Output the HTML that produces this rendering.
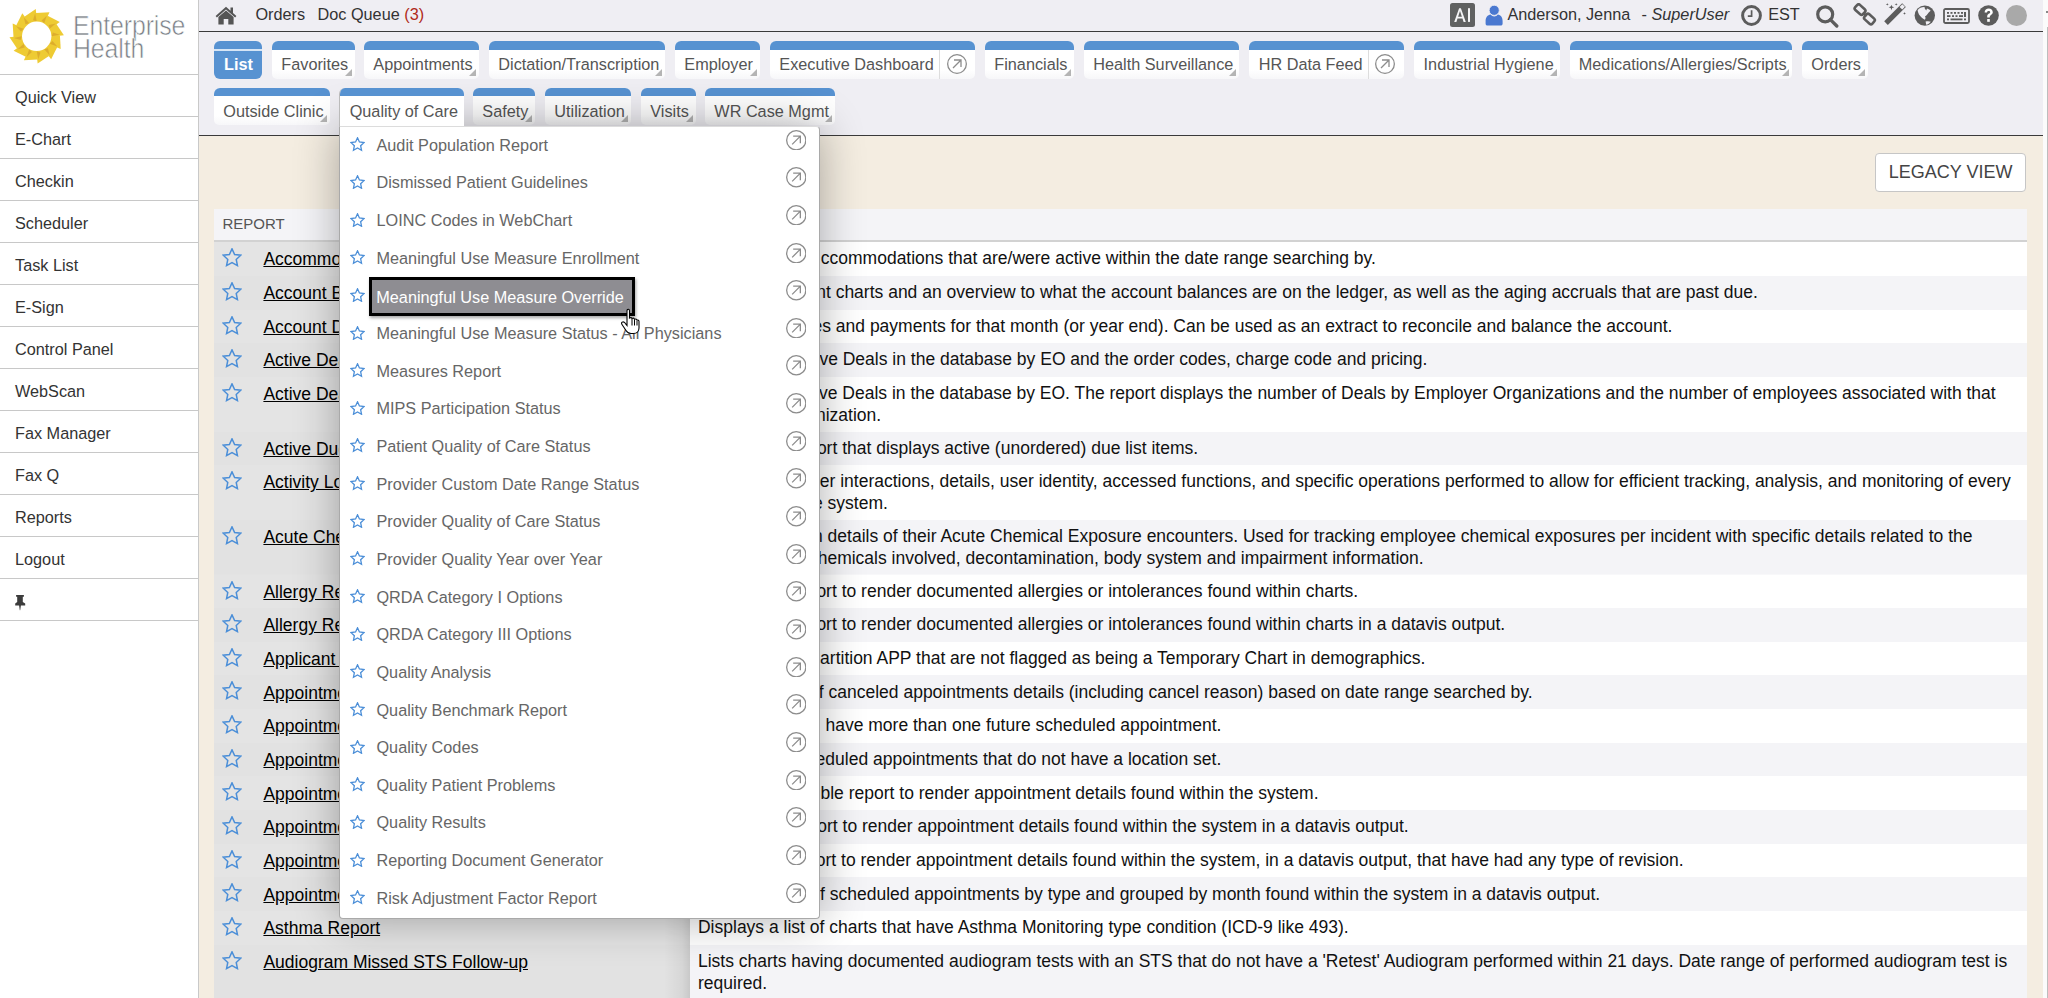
<!DOCTYPE html><html><head><meta charset="utf-8"><style>
*{box-sizing:border-box;margin:0;padding:0}
html,body{width:2048px;height:998px;overflow:hidden;background:#fff;font-family:"Liberation Sans", sans-serif;}
.abs{position:absolute}
#side{position:absolute;left:0;top:0;width:199px;height:998px;background:#fff;border-right:1px solid #c9c9c9}
.sitem{position:absolute;left:0;width:198px;height:42px;border-top:1.5px solid #c8c8c8;font-size:16.25px;color:#333;padding-left:15.5px}
.sitem span{position:absolute;left:15px;top:13.4px;line-height:18px}
#top{position:absolute;left:199px;top:0;width:1844px;height:32px;background:#efeef3;border-bottom:1.5px solid #3a3a3a}
#tabs{position:absolute;left:199px;top:32px;width:1844px;height:104px;background:#efeef3;border-bottom:1.5px solid #3a3a3a}
#content{position:absolute;left:199px;top:136px;width:1844px;height:862px;background:#f4ede1}
.tt{position:absolute;font-size:16.25px;color:#333;white-space:nowrap;line-height:18px;margin-top:-1.6px}
.tab{position:absolute;height:37.5px;border-radius:6px 6px 5px 5px;background:linear-gradient(#fff 0%,#fff 75%,#f7f7f9 100%);overflow:hidden;font-size:16.25px;color:#555;white-space:nowrap}
.tab .bar{position:absolute;left:0;top:0;right:0;height:8.5px;background:#5792d1}
.tab .lbl{position:absolute;left:9.3px;top:13.7px;line-height:18px}
.tab .tri{position:absolute;right:3px;bottom:3px;width:0;height:0;border-left:7px solid transparent;border-bottom:7px solid #b4b4b4}
.tab .div{position:absolute;top:9px;bottom:0;width:1px;background:#ddd}
.tab .ic{position:absolute;top:12.5px}
#tbl{position:absolute;left:214px;top:209px;width:1813px}
.hdr{position:absolute;left:0;top:0;width:1813px;height:33.3px;background:#f4f4f7;border-bottom:2px solid #d2d2d2}
.hdr span{position:absolute;left:8.5px;top:7px;font-size:15px;color:#555;line-height:16px}
.row{position:absolute;left:0;width:1813px}
.rc{position:absolute;left:0;top:0;bottom:0;width:475.6px;background:#e2e2e2 linear-gradient(to right,rgba(0,0,0,0) 0,rgba(0,0,0,0) 450px,rgba(0,0,0,0.05) 468px,rgba(0,0,0,0.11) 475.6px)}
.rc.odd{background-color:#e4e4e4}
.rc .st{position:absolute;left:8px;top:6px}
.rc a{position:absolute;left:49.4px;top:7.2px;font-size:17.5px;line-height:20px;color:#000;text-decoration:underline;white-space:nowrap}
.dc{position:absolute;left:475.6px;top:0;bottom:0;right:0;background:#fff}
.dc.even{background:#f4f4f7}
.dc .tx{position:absolute;left:8.4px;top:6.2px;font-size:17.5px;line-height:21px;color:#111;white-space:nowrap}
.sp{display:inline-block;height:1px}
#dd{position:absolute;left:338.7px;top:125.5px;width:481.7px;height:793px;background:#fff;border:1px solid #a9a9a9;border-top-color:#dcdcdc;border-radius:0 4px 4px 4px;box-shadow:0 0 45px rgba(0,0,0,0.32)}
.di{position:absolute;left:0;width:478px;height:37.65px}
.di .st{position:absolute;left:10.3px;top:9.3px}
.di .t{position:absolute;left:36.8px;top:7.8px;font-size:16.25px;line-height:18px;color:#666;white-space:nowrap}
.di .ar{position:absolute;left:446.3px;top:1.6px}
#hl{position:absolute;left:29.8px;top:150px;width:266px;height:39.5px;background:#8e8d92;border:3.7px solid #000;box-shadow:1px 2px 3px rgba(0,0,0,0.35)}
#hl span{position:absolute;left:3.8px;top:8.1px;font-size:16.25px;line-height:18px;color:#fff;white-space:nowrap}
</style></head><body>
<div id="side">
<svg class="abs" style="left:0;top:0" width="75" height="75" viewBox="0 0 75 75"><path d="M35.75,9.12 L37.19,22.31 L27.33,25.90 L24.41,16.63 Z" fill="#eecb33"/><path d="M49.47,12.28 L44.12,24.43 L33.79,22.61 L35.89,13.11 Z" fill="#eecb33"/><path d="M59.77,21.89 L49.06,29.73 L41.03,22.99 L47.59,15.82 Z" fill="#eecb33"/><path d="M63.88,35.35 L50.69,36.79 L47.10,26.93 L56.37,24.01 Z" fill="#eecb33"/><path d="M60.72,49.07 L48.57,43.72 L50.39,33.39 L59.89,35.49 Z" fill="#eecb33"/><path d="M51.11,59.37 L43.27,48.66 L50.01,40.63 L57.18,47.19 Z" fill="#eecb33"/><path d="M37.65,63.48 L36.21,50.29 L46.07,46.70 L48.99,55.97 Z" fill="#eecb33"/><path d="M23.93,60.32 L29.28,48.17 L39.61,49.99 L37.51,59.49 Z" fill="#eecb33"/><path d="M13.63,50.71 L24.34,42.87 L32.37,49.61 L25.81,56.78 Z" fill="#eecb33"/><path d="M9.52,37.25 L22.71,35.81 L26.30,45.67 L17.03,48.59 Z" fill="#eecb33"/><path d="M12.68,23.53 L24.83,28.88 L23.01,39.21 L13.51,37.11 Z" fill="#eecb33"/><path d="M22.29,13.23 L30.13,23.94 L23.39,31.97 L16.22,25.41 Z" fill="#eecb33"/><path d="M35.10,13.36 L36.70,21.30 L32.99,20.22 Z" fill="#d9a82c" opacity="0.85"/><path d="M46.78,15.63 L44.20,23.31 L41.52,20.52 Z" fill="#d9a82c" opacity="0.85"/><path d="M55.77,23.44 L49.69,28.80 L48.77,25.05 Z" fill="#d9a82c" opacity="0.85"/><path d="M59.64,34.70 L51.70,36.30 L52.78,32.59 Z" fill="#d9a82c" opacity="0.85"/><path d="M57.37,46.38 L49.69,43.80 L52.48,41.12 Z" fill="#d9a82c" opacity="0.85"/><path d="M49.56,55.37 L44.20,49.29 L47.95,48.37 Z" fill="#d9a82c" opacity="0.85"/><path d="M38.30,59.24 L36.70,51.30 L40.41,52.38 Z" fill="#d9a82c" opacity="0.85"/><path d="M26.62,56.97 L29.20,49.29 L31.88,52.08 Z" fill="#d9a82c" opacity="0.85"/><path d="M17.63,49.16 L23.71,43.80 L24.63,47.55 Z" fill="#d9a82c" opacity="0.85"/><path d="M13.76,37.90 L21.70,36.30 L20.62,40.01 Z" fill="#d9a82c" opacity="0.85"/><path d="M16.03,26.22 L23.71,28.80 L20.92,31.48 Z" fill="#d9a82c" opacity="0.85"/><path d="M23.84,17.23 L29.20,23.31 L25.45,24.23 Z" fill="#d9a82c" opacity="0.85"/><circle cx="36.7" cy="36.3" r="14.7" fill="#fff"/></svg>
<div class="abs" style="left:72.5px;top:14.5px;font-size:27px;line-height:23px;color:#7a8086;transform:scaleX(0.92);transform-origin:0 0;letter-spacing:-0.1px;-webkit-text-stroke:0.6px #fff">Enterprise<br>Health</div>
<div class="sitem" style="top:73.8px"><span>Quick View</span></div>
<div class="sitem" style="top:115.8px"><span>E-Chart</span></div>
<div class="sitem" style="top:157.8px"><span>Checkin</span></div>
<div class="sitem" style="top:199.8px"><span>Scheduler</span></div>
<div class="sitem" style="top:241.8px"><span>Task List</span></div>
<div class="sitem" style="top:283.8px"><span>E-Sign</span></div>
<div class="sitem" style="top:325.8px"><span>Control Panel</span></div>
<div class="sitem" style="top:367.8px"><span>WebScan</span></div>
<div class="sitem" style="top:409.8px"><span>Fax Manager</span></div>
<div class="sitem" style="top:451.8px"><span>Fax Q</span></div>
<div class="sitem" style="top:493.8px"><span>Reports</span></div>
<div class="sitem" style="top:535.8px"><span>Logout</span></div>
<div class="sitem" style="top:577.8px;border-bottom:1.5px solid #c8c8c8;height:43.5px"><svg class="abs" style="left:15px;top:14.8px" width="11" height="17" viewBox="0 0 11 17"><path d="M1.1,1 H8.9 V2.8 H7.8 V8 L10.2,9.5 V11.6 H5.9 L5.2,16.2 H4.8 L4.1,11.6 H0.2 V9.5 L2.2,8 V2.8 H1.1 Z" fill="#3c3c3c"/></svg></div>
</div>
<div id="top">
</div>
<svg class="abs" style="left:214.5px;top:5.5px" width="22" height="19" viewBox="0 0 22 19"><path d="M11,0.8 L0.6,10 L1.9,11.4 L11,3.4 L20.1,11.4 L21.4,10 L18,7 V1.5 H15.5 V4.8 Z" fill="#555"/><path d="M3.4,11 L11,4.6 L18.6,11 V18.6 H13.3 V13 H8.7 V18.6 H3.4 Z" fill="#555"/></svg>
<div class="tt" style="left:255.4px;top:6.5px">Orders</div>
<div class="tt" style="left:317.5px;top:6.5px">Doc Queue <span style="color:#b02a1a">(3)</span></div>
<div class="abs" style="left:1450.3px;top:2.9px;width:24.6px;height:24px;background:#606161;border-radius:2.5px"></div>
<svg class="abs" style="left:1450.3px;top:2.9px" width="25" height="24" viewBox="0 0 25 24"><path d="M4.2,18.9 L9.1,5.2 H10.9 L15.8,18.9 H13.6 L12.5,15.6 H7.5 L6.4,18.9 Z M8.1,13.8 H11.9 L10,8 Z" fill="#f4f4f6"/><rect x="18" y="5.2" width="2" height="13.7" fill="#f4f4f6"/></svg>
<svg class="abs" style="left:1484.5px;top:4.5px" width="18" height="21" viewBox="0 0 18 21"><path d="M0.6,18.8 V16.2 C0.6,12.6 2.6,10 5.6,9.6 C6.6,10.9 7.8,11.4 9.2,11.4 C10.6,11.4 11.8,10.9 12.8,9.6 C15.8,10 17.6,12.6 17.6,16.2 V18.8 C17.6,19.9 16.8,20.6 15.7,20.6 H2.5 C1.4,20.6 0.6,19.9 0.6,18.8 Z" fill="#4a78d0"/><circle cx="9.2" cy="5.3" r="5.1" fill="#4a78d0" stroke="#efeef3" stroke-width="0.9"/></svg>
<div class="tt" style="left:1507.4px;top:6.5px">Anderson, Jenna</div>
<div class="tt" style="left:1641.5px;top:6.5px">- <i>SuperUser</i></div>
<svg class="abs" style="left:1741px;top:4.5px" width="21" height="21" viewBox="0 0 21 21"><circle cx="10.5" cy="10.5" r="8.9" fill="none" stroke="#5c5c5c" stroke-width="3"/><path d="M10.6,5.3 V11.1 H6.8" fill="none" stroke="#5c5c5c" stroke-width="1.7"/></svg>
<div class="tt" style="left:1768.2px;top:6.5px">EST</div>
<svg class="abs" style="left:1815.5px;top:4.5px" width="23" height="23" viewBox="0 0 23 23"><circle cx="9.2" cy="9.3" r="7.5" fill="none" stroke="#5c5c5c" stroke-width="3.2"/><path d="M14.4,14.6 L20.8,21" stroke="#5c5c5c" stroke-width="3.3" stroke-linecap="round"/></svg>
<svg class="abs" style="left:1853px;top:2.5px" width="24" height="23" viewBox="0 0 24 23"><g fill="none" stroke="#5c5c5c" stroke-width="2.6"><rect x="1.8" y="3.2" width="10.5" height="6.8" rx="2" transform="rotate(42 7.05 6.6)"/><rect x="11.2" y="12.6" width="10.5" height="6.8" rx="2" transform="rotate(42 16.45 16)"/><path d="M9.8,9.8 L13.6,13"/></g></svg>
<svg class="abs" style="left:1880px;top:0px" width="30" height="30" viewBox="0 0 30 30"><path d="M4.2,21.3 L22.2,3.3 L25.8,6.9 L7.8,24.9 Z" fill="#5c5c5c"/><path d="M19.6,6.9 L22.3,4.2 L24.9,6.8 L22.2,9.5 Z" fill="#f0eff4"/><g fill="#5c5c5c"><path d="M11.4,4.8 L12.1,6.6 L14.3,7.3 L12.1,8 L11.4,10.2 L10.7,8 L8.6,7.3 L10.7,6.6 Z"/><path d="M7.3,3.3 L7.8,4 L8.8,4.4 L7.8,4.8 L7.3,5.6 L6.8,4.8 L5.8,4.4 L6.8,4 Z"/><path d="M16.2,3.3 L16.7,4 L17.7,4.4 L16.7,4.8 L16.2,5.6 L15.7,4.8 L14.7,4.4 L15.7,4 Z"/><path d="M24.5,12.2 L25,13 L26,13.4 L25,13.8 L24.5,14.8 L24,13.8 L23,13.4 L24,13 Z"/></g></svg>
<svg class="abs" style="left:1914px;top:4.5px" width="22" height="22" viewBox="0 0 22 22"><circle cx="10.8" cy="10.6" r="10.2" fill="#5c5c5c"/><path d="M3.6,5.2 C5,2.8 8,1.8 10.5,1.9 L10.8,3.5 L12.2,5.5 L13,3.5 C14.5,4 16,4.8 16.6,5.8 C15,7 14,8.6 12.6,10.2 L11,11.4 L11.6,13 L10.9,14.8 C8.5,13.5 6.5,11.5 5,9.5 C4.2,8 3.8,6.5 3.6,5.2 Z" fill="#f0eff4"/><path d="M11.6,16.6 C13.5,16 15.5,16.2 16.8,16.8 C15.2,18.8 13.5,19.6 12.2,19.8 Z" fill="#f0eff4"/></svg>
<svg class="abs" style="left:1943px;top:8px" width="27" height="16" viewBox="0 0 27 16"><rect x="1" y="1" width="25" height="14" rx="1.5" fill="none" stroke="#5c5c5c" stroke-width="1.8"/><g fill="#5c5c5c"><rect x="4" y="4" width="2" height="1.8"/><rect x="7.5" y="4" width="2" height="1.8"/><rect x="11" y="4" width="2" height="1.8"/><rect x="14.5" y="4" width="2" height="1.8"/><rect x="18" y="4" width="2" height="1.8"/><rect x="21" y="4" width="2" height="5"/><rect x="4" y="7.2" width="3.5" height="1.8"/><rect x="9" y="7.2" width="2" height="1.8"/><rect x="12.5" y="7.2" width="2" height="1.8"/><rect x="16" y="7.2" width="4" height="1.8"/><rect x="4" y="10.5" width="2" height="1.8"/><rect x="7.5" y="10.5" width="12" height="1.8"/><rect x="21" y="10.5" width="2" height="1.8"/></g></svg>
<svg class="abs" style="left:1977.5px;top:4.5px" width="21" height="21" viewBox="0 0 21 21"><circle cx="10.5" cy="10.5" r="10.3" fill="#5c5c5c"/><path d="M6.6,7.6 C6.6,5 8.5,3.6 10.7,3.6 C13,3.6 14.8,5 14.8,7.3 C14.8,9.8 11.8,10 11.8,12 V12.6 H9.2 V11.6 C9.2,8.6 12.2,8.8 12.2,7.3 C12.2,6.4 11.6,5.9 10.6,5.9 C9.6,5.9 9,6.6 9,7.6 Z" fill="#fff"/><rect x="9.2" y="14" width="2.6" height="2.8" fill="#fff"/></svg>
<div class="abs" style="left:2006px;top:4.5px;width:21px;height:21px;border-radius:50%;background:#a9a9a9"></div>
<div id="tabs"></div>
<div id="content"></div>
<div class="abs" style="left:2043px;top:0;width:5px;height:998px;background:#fbfbfb"></div>
<div class="abs" style="left:2046.5px;top:27px;width:1.5px;height:971px;background:#bdbdbd"></div>
<div class="abs" style="left:2046px;top:11px;width:2px;height:2px;background:#888"></div>
<div class="abs" style="left:214px;top:41px;width:47.5px;height:37.5px;border-radius:6px;background:#5792d1;overflow:hidden"><div class="abs" style="left:0;top:8.3px;width:100%;height:1.3px;background:#d6e5f5"></div><div class="abs" style="left:10px;top:13.7px;font-size:16.25px;line-height:18px;color:#fff;font-weight:bold">List</div></div>
<div class="tab" style="left:272px;top:41px;width:82.8px;height:37.6px"><div class="bar"></div><div class="lbl">Favorites</div><div class="tri"></div></div>
<div class="tab" style="left:364px;top:41px;width:115px;height:37.6px"><div class="bar"></div><div class="lbl">Appointments</div><div class="tri"></div></div>
<div class="tab" style="left:489px;top:41px;width:176px;height:37.6px"><div class="bar"></div><div class="lbl">Dictation/Transcription</div><div class="tri"></div></div>
<div class="tab" style="left:675px;top:41px;width:85px;height:37.6px"><div class="bar"></div><div class="lbl">Employer</div><div class="tri"></div></div>
<div class="tab" style="left:770px;top:41px;width:205px;height:37.6px"><div class="bar"></div><div class="lbl">Executive Dashboard</div><div class="div" style="left:169px"></div><div class="ic" style="left:176.5px"><svg width="20" height="20" viewBox="0 0 20 20"><circle cx="10.0" cy="10.0" r="9.35" fill="none" stroke="#8c8c8c" stroke-width="1.3"/><path d="M6.00,14.00 L14.00,6.00 M7.00,6.00 L14.00,6.00 L14.00,13.00" fill="none" stroke="#8c8c8c" stroke-width="1.3"/></svg></div></div>
<div class="tab" style="left:985px;top:41px;width:89px;height:37.6px"><div class="bar"></div><div class="lbl">Financials</div><div class="tri"></div></div>
<div class="tab" style="left:1084px;top:41px;width:155px;height:37.6px"><div class="bar"></div><div class="lbl">Health Surveillance</div><div class="tri"></div></div>
<div class="tab" style="left:1249.4px;top:41px;width:154.6px;height:37.6px"><div class="bar"></div><div class="lbl">HR Data Feed</div><div class="div" style="left:118.6px"></div><div class="ic" style="left:126.1px"><svg width="20" height="20" viewBox="0 0 20 20"><circle cx="10.0" cy="10.0" r="9.35" fill="none" stroke="#8c8c8c" stroke-width="1.3"/><path d="M6.00,14.00 L14.00,6.00 M7.00,6.00 L14.00,6.00 L14.00,13.00" fill="none" stroke="#8c8c8c" stroke-width="1.3"/></svg></div></div>
<div class="tab" style="left:1414.3px;top:41px;width:145.5px;height:37.6px"><div class="bar"></div><div class="lbl">Industrial Hygiene</div><div class="tri"></div></div>
<div class="tab" style="left:1569.5px;top:41px;width:222.5px;height:37.6px"><div class="bar"></div><div class="lbl">Medications/Allergies/Scripts</div><div class="tri"></div></div>
<div class="tab" style="left:1802px;top:41px;width:66px;height:37.6px"><div class="bar"></div><div class="lbl">Orders</div><div class="tri"></div></div>
<div class="tab" style="left:214px;top:88px;width:116px;height:36.8px"><div class="bar" style="height:8px"></div><div class="lbl">Outside Clinic</div><div class="tri"></div></div>
<div class="tab" style="left:473px;top:88px;width:62px;height:36.8px"><div class="bar" style="height:8px"></div><div class="lbl">Safety</div><div class="tri"></div></div>
<div class="tab" style="left:545px;top:88px;width:86px;height:36.8px"><div class="bar" style="height:8px"></div><div class="lbl">Utilization</div><div class="tri"></div></div>
<div class="tab" style="left:641px;top:88px;width:55px;height:36.8px"><div class="bar" style="height:8px"></div><div class="lbl">Visits</div><div class="tri"></div></div>
<div class="tab" style="left:705px;top:88px;width:130px;height:36.8px"><div class="bar" style="height:8px"></div><div class="lbl">WR Case Mgmt</div><div class="tri"></div></div>
<div class="abs" style="left:1875.3px;top:152.6px;width:151px;height:39px;background:#fff;border:1px solid #c6c6c6;border-radius:4px;font-size:18px;color:#444;line-height:20px;padding:8px 0 0 12.5px;white-space:nowrap">LEGACY VIEW</div>
<div id="tbl"><div class="abs" style="left:0;top:33px;width:475.6px;height:760px;background:#e3e3e3"></div><div class="abs" style="left:475.6px;top:33px;width:1337.4px;height:760px;background:#f8f8fa"></div><div class="hdr"><span>REPORT</span></div>
<div class="row" style="top:33.30px;height:33.65px"><div class="rc odd"><div class="st"><svg width="20" height="19" viewBox="0 0 20 19"><polygon points="10.00,0.82 12.61,6.48 18.80,7.21 14.22,11.44 15.44,17.55 10.00,14.51 4.56,17.55 5.78,11.44 1.20,7.21 7.39,6.48" fill="none" stroke="#4c8fd8" stroke-width="1.5" stroke-linejoin="miter"/></svg></div><a>Accommodations Report</a></div><div class="dc"><div class="tx"><span class="sp" style="width:122.8px"></span>ccommodations that are/were active within the date range searching by.</div></div></div>
<div class="row" style="top:66.95px;height:33.65px"><div class="rc"><div class="st"><svg width="20" height="19" viewBox="0 0 20 19"><polygon points="10.00,0.82 12.61,6.48 18.80,7.21 14.22,11.44 15.44,17.55 10.00,14.51 4.56,17.55 5.78,11.44 1.20,7.21 7.39,6.48" fill="none" stroke="#4c8fd8" stroke-width="1.5" stroke-linejoin="miter"/></svg></div><a>Account Balances</a></div><div class="dc even"><div class="tx"><span class="sp" style="width:118.2px"></span>nt charts and an overview to what the account balances are on the ledger, as well as the aging accruals that are past due.</div></div></div>
<div class="row" style="top:100.60px;height:33.65px"><div class="rc odd"><div class="st"><svg width="20" height="19" viewBox="0 0 20 19"><polygon points="10.00,0.82 12.61,6.48 18.80,7.21 14.22,11.44 15.44,17.55 10.00,14.51 4.56,17.55 5.78,11.44 1.20,7.21 7.39,6.48" fill="none" stroke="#4c8fd8" stroke-width="1.5" stroke-linejoin="miter"/></svg></div><a>Account Detail Report</a></div><div class="dc"><div class="tx"><span class="sp" style="width:114.5px"></span>es and payments for that month (or year end). Can be used as an extract to reconcile and balance the account.</div></div></div>
<div class="row" style="top:134.25px;height:33.65px"><div class="rc"><div class="st"><svg width="20" height="19" viewBox="0 0 20 19"><polygon points="10.00,0.82 12.61,6.48 18.80,7.21 14.22,11.44 15.44,17.55 10.00,14.51 4.56,17.55 5.78,11.44 1.20,7.21 7.39,6.48" fill="none" stroke="#4c8fd8" stroke-width="1.5" stroke-linejoin="miter"/></svg></div><a>Active Deals Report</a></div><div class="dc even"><div class="tx"><span class="sp" style="width:121.4px"></span>ve Deals in the database by EO and the order codes, charge code and pricing.</div></div></div>
<div class="row" style="top:167.90px;height:54.65px"><div class="rc odd"><div class="st"><svg width="20" height="19" viewBox="0 0 20 19"><polygon points="10.00,0.82 12.61,6.48 18.80,7.21 14.22,11.44 15.44,17.55 10.00,14.51 4.56,17.55 5.78,11.44 1.20,7.21 7.39,6.48" fill="none" stroke="#4c8fd8" stroke-width="1.5" stroke-linejoin="miter"/></svg></div><a>Active Deals Summary</a></div><div class="dc"><div class="tx" style="line-height:21.9px;top:6.1px"><span class="sp" style="width:121.0px"></span>ve Deals in the database by EO. The report displays the number of Deals by Employer Organizations and the number of employees associated with that<br><span class="sp" style="width:118.0px"></span>nization.</div></div></div>
<div class="row" style="top:222.55px;height:33.65px"><div class="rc"><div class="st"><svg width="20" height="19" viewBox="0 0 20 19"><polygon points="10.00,0.82 12.61,6.48 18.80,7.21 14.22,11.44 15.44,17.55 10.00,14.51 4.56,17.55 5.78,11.44 1.20,7.21 7.39,6.48" fill="none" stroke="#4c8fd8" stroke-width="1.5" stroke-linejoin="miter"/></svg></div><a>Active Due List Items</a></div><div class="dc even"><div class="tx"><span class="sp" style="width:118.9px"></span>ort that displays active (unordered) due list items.</div></div></div>
<div class="row" style="top:256.20px;height:54.65px"><div class="rc odd"><div class="st"><svg width="20" height="19" viewBox="0 0 20 19"><polygon points="10.00,0.82 12.61,6.48 18.80,7.21 14.22,11.44 15.44,17.55 10.00,14.51 4.56,17.55 5.78,11.44 1.20,7.21 7.39,6.48" fill="none" stroke="#4c8fd8" stroke-width="1.5" stroke-linejoin="miter"/></svg></div><a>Activity Log Report</a></div><div class="dc"><div class="tx" style="line-height:21.9px;top:6.1px"><span class="sp" style="width:121.8px"></span>er interactions, details, user identity, accessed functions, and specific operations performed to allow for efficient tracking, analysis, and monitoring of every<br><span class="sp" style="width:115.0px"></span>e system.</div></div></div>
<div class="row" style="top:310.85px;height:54.65px"><div class="rc"><div class="st"><svg width="20" height="19" viewBox="0 0 20 19"><polygon points="10.00,0.82 12.61,6.48 18.80,7.21 14.22,11.44 15.44,17.55 10.00,14.51 4.56,17.55 5.78,11.44 1.20,7.21 7.39,6.48" fill="none" stroke="#4c8fd8" stroke-width="1.5" stroke-linejoin="miter"/></svg></div><a>Acute Chemical Exposure</a></div><div class="dc even"><div class="tx" style="line-height:21.9px;top:6.1px"><span class="sp" style="width:115.0px"></span>n details of their Acute Chemical Exposure encounters. Used for tracking employee chemical exposures per incident with specific details related to the<br><span class="sp" style="width:119.7px"></span>hemicals involved, decontamination, body system and impairment information.</div></div></div>
<div class="row" style="top:365.50px;height:33.65px"><div class="rc odd"><div class="st"><svg width="20" height="19" viewBox="0 0 20 19"><polygon points="10.00,0.82 12.61,6.48 18.80,7.21 14.22,11.44 15.44,17.55 10.00,14.51 4.56,17.55 5.78,11.44 1.20,7.21 7.39,6.48" fill="none" stroke="#4c8fd8" stroke-width="1.5" stroke-linejoin="miter"/></svg></div><a>Allergy Report</a></div><div class="dc"><div class="tx"><span class="sp" style="width:118.4px"></span>ort to render documented allergies or intolerances found within charts.</div></div></div>
<div class="row" style="top:399.15px;height:33.65px"><div class="rc"><div class="st"><svg width="20" height="19" viewBox="0 0 20 19"><polygon points="10.00,0.82 12.61,6.48 18.80,7.21 14.22,11.44 15.44,17.55 10.00,14.51 4.56,17.55 5.78,11.44 1.20,7.21 7.39,6.48" fill="none" stroke="#4c8fd8" stroke-width="1.5" stroke-linejoin="miter"/></svg></div><a>Allergy Report (Datavis)</a></div><div class="dc even"><div class="tx"><span class="sp" style="width:118.4px"></span>ort to render documented allergies or intolerances found within charts in a datavis output.</div></div></div>
<div class="row" style="top:432.80px;height:33.65px"><div class="rc odd"><div class="st"><svg width="20" height="19" viewBox="0 0 20 19"><polygon points="10.00,0.82 12.61,6.48 18.80,7.21 14.22,11.44 15.44,17.55 10.00,14.51 4.56,17.55 5.78,11.44 1.20,7.21 7.39,6.48" fill="none" stroke="#4c8fd8" stroke-width="1.5" stroke-linejoin="miter"/></svg></div><a>Applicant Charts</a></div><div class="dc"><div class="tx"><span class="sp" style="width:122.1px"></span>artition APP that are not flagged as being a Temporary Chart in demographics.</div></div></div>
<div class="row" style="top:466.45px;height:33.65px"><div class="rc"><div class="st"><svg width="20" height="19" viewBox="0 0 20 19"><polygon points="10.00,0.82 12.61,6.48 18.80,7.21 14.22,11.44 15.44,17.55 10.00,14.51 4.56,17.55 5.78,11.44 1.20,7.21 7.39,6.48" fill="none" stroke="#4c8fd8" stroke-width="1.5" stroke-linejoin="miter"/></svg></div><a>Appointment Cancellations</a></div><div class="dc even"><div class="tx"><span class="sp" style="width:120.8px"></span>f canceled appointments details (including cancel reason) based on date range searched by.</div></div></div>
<div class="row" style="top:500.10px;height:33.65px"><div class="rc odd"><div class="st"><svg width="20" height="19" viewBox="0 0 20 19"><polygon points="10.00,0.82 12.61,6.48 18.80,7.21 14.22,11.44 15.44,17.55 10.00,14.51 4.56,17.55 5.78,11.44 1.20,7.21 7.39,6.48" fill="none" stroke="#4c8fd8" stroke-width="1.5" stroke-linejoin="miter"/></svg></div><a>Appointment Multiple Future</a></div><div class="dc"><div class="tx"><span class="sp" style="width:122.6px"></span>&nbsp;have more than one future scheduled appointment.</div></div></div>
<div class="row" style="top:533.75px;height:33.65px"><div class="rc"><div class="st"><svg width="20" height="19" viewBox="0 0 20 19"><polygon points="10.00,0.82 12.61,6.48 18.80,7.21 14.22,11.44 15.44,17.55 10.00,14.51 4.56,17.55 5.78,11.44 1.20,7.21 7.39,6.48" fill="none" stroke="#4c8fd8" stroke-width="1.5" stroke-linejoin="miter"/></svg></div><a>Appointment No Location</a></div><div class="dc even"><div class="tx"><span class="sp" style="width:117.6px"></span>eduled appointments that do not have a location set.</div></div></div>
<div class="row" style="top:567.40px;height:33.65px"><div class="rc odd"><div class="st"><svg width="20" height="19" viewBox="0 0 20 19"><polygon points="10.00,0.82 12.61,6.48 18.80,7.21 14.22,11.44 15.44,17.55 10.00,14.51 4.56,17.55 5.78,11.44 1.20,7.21 7.39,6.48" fill="none" stroke="#4c8fd8" stroke-width="1.5" stroke-linejoin="miter"/></svg></div><a>Appointment Report</a></div><div class="dc"><div class="tx"><span class="sp" style="width:122.5px"></span>ble report to render appointment details found within the system.</div></div></div>
<div class="row" style="top:601.05px;height:33.65px"><div class="rc"><div class="st"><svg width="20" height="19" viewBox="0 0 20 19"><polygon points="10.00,0.82 12.61,6.48 18.80,7.21 14.22,11.44 15.44,17.55 10.00,14.51 4.56,17.55 5.78,11.44 1.20,7.21 7.39,6.48" fill="none" stroke="#4c8fd8" stroke-width="1.5" stroke-linejoin="miter"/></svg></div><a>Appointment Report (Datavis)</a></div><div class="dc even"><div class="tx"><span class="sp" style="width:119.3px"></span>ort to render appointment details found within the system in a datavis output.</div></div></div>
<div class="row" style="top:634.70px;height:33.65px"><div class="rc odd"><div class="st"><svg width="20" height="19" viewBox="0 0 20 19"><polygon points="10.00,0.82 12.61,6.48 18.80,7.21 14.22,11.44 15.44,17.55 10.00,14.51 4.56,17.55 5.78,11.44 1.20,7.21 7.39,6.48" fill="none" stroke="#4c8fd8" stroke-width="1.5" stroke-linejoin="miter"/></svg></div><a>Appointment Revisions</a></div><div class="dc"><div class="tx"><span class="sp" style="width:117.8px"></span>ort to render appointment details found within the system, in a datavis output, that have had any type of revision.</div></div></div>
<div class="row" style="top:668.35px;height:33.65px"><div class="rc"><div class="st"><svg width="20" height="19" viewBox="0 0 20 19"><polygon points="10.00,0.82 12.61,6.48 18.80,7.21 14.22,11.44 15.44,17.55 10.00,14.51 4.56,17.55 5.78,11.44 1.20,7.21 7.39,6.48" fill="none" stroke="#4c8fd8" stroke-width="1.5" stroke-linejoin="miter"/></svg></div><a>Appointment Summary</a></div><div class="dc even"><div class="tx"><span class="sp" style="width:122.0px"></span>f scheduled appointments by type and grouped by month found within the system in a datavis output.</div></div></div>
<div class="row" style="top:702.00px;height:33.65px"><div class="rc odd"><div class="st"><svg width="20" height="19" viewBox="0 0 20 19"><polygon points="10.00,0.82 12.61,6.48 18.80,7.21 14.22,11.44 15.44,17.55 10.00,14.51 4.56,17.55 5.78,11.44 1.20,7.21 7.39,6.48" fill="none" stroke="#4c8fd8" stroke-width="1.5" stroke-linejoin="miter"/></svg></div><a>Asthma Report</a></div><div class="dc"><div class="tx">Displays a list of charts that have Asthma Monitoring type condition (ICD-9 like 493).</div></div></div>
<div class="row" style="top:735.65px;height:54.65px"><div class="rc"><div class="st"><svg width="20" height="19" viewBox="0 0 20 19"><polygon points="10.00,0.82 12.61,6.48 18.80,7.21 14.22,11.44 15.44,17.55 10.00,14.51 4.56,17.55 5.78,11.44 1.20,7.21 7.39,6.48" fill="none" stroke="#4c8fd8" stroke-width="1.5" stroke-linejoin="miter"/></svg></div><a>Audiogram Missed STS Follow-up</a></div><div class="dc even"><div class="tx" style="line-height:21.9px;top:6.1px">Lists charts having documented audiogram tests with an STS that do not have a &#39;Retest&#39; Audiogram performed within 21 days. Date range of performed audiogram test is<br>required.</div></div></div>
</div>
<div id="dd">
<div class="di" style="top:1.50px"><div class="st"><svg width="15" height="14.5" viewBox="0 0 15 14.5"><polygon points="7.50,0.84 9.43,5.02 14.01,5.57 10.63,8.70 11.53,13.23 7.50,10.97 3.47,13.23 4.37,8.70 0.99,5.57 5.57,5.02" fill="none" stroke="#4c8fd8" stroke-width="1.3" stroke-linejoin="miter"/></svg></div><div class="t">Audit Population Report</div><div class="ar"><svg width="20.5" height="20.5" viewBox="0 0 20.5 20.5"><circle cx="10.25" cy="10.25" r="9.6" fill="none" stroke="#8c8c8c" stroke-width="1.3"/><path d="M6.15,14.35 L14.35,6.15 M7.17,6.15 L14.35,6.15 L14.35,13.32" fill="none" stroke="#8c8c8c" stroke-width="1.3"/></svg></div></div>
<div class="di" style="top:39.15px"><div class="st"><svg width="15" height="14.5" viewBox="0 0 15 14.5"><polygon points="7.50,0.84 9.43,5.02 14.01,5.57 10.63,8.70 11.53,13.23 7.50,10.97 3.47,13.23 4.37,8.70 0.99,5.57 5.57,5.02" fill="none" stroke="#4c8fd8" stroke-width="1.3" stroke-linejoin="miter"/></svg></div><div class="t">Dismissed Patient Guidelines</div><div class="ar"><svg width="20.5" height="20.5" viewBox="0 0 20.5 20.5"><circle cx="10.25" cy="10.25" r="9.6" fill="none" stroke="#8c8c8c" stroke-width="1.3"/><path d="M6.15,14.35 L14.35,6.15 M7.17,6.15 L14.35,6.15 L14.35,13.32" fill="none" stroke="#8c8c8c" stroke-width="1.3"/></svg></div></div>
<div class="di" style="top:76.80px"><div class="st"><svg width="15" height="14.5" viewBox="0 0 15 14.5"><polygon points="7.50,0.84 9.43,5.02 14.01,5.57 10.63,8.70 11.53,13.23 7.50,10.97 3.47,13.23 4.37,8.70 0.99,5.57 5.57,5.02" fill="none" stroke="#4c8fd8" stroke-width="1.3" stroke-linejoin="miter"/></svg></div><div class="t">LOINC Codes in WebChart</div><div class="ar"><svg width="20.5" height="20.5" viewBox="0 0 20.5 20.5"><circle cx="10.25" cy="10.25" r="9.6" fill="none" stroke="#8c8c8c" stroke-width="1.3"/><path d="M6.15,14.35 L14.35,6.15 M7.17,6.15 L14.35,6.15 L14.35,13.32" fill="none" stroke="#8c8c8c" stroke-width="1.3"/></svg></div></div>
<div class="di" style="top:114.45px"><div class="st"><svg width="15" height="14.5" viewBox="0 0 15 14.5"><polygon points="7.50,0.84 9.43,5.02 14.01,5.57 10.63,8.70 11.53,13.23 7.50,10.97 3.47,13.23 4.37,8.70 0.99,5.57 5.57,5.02" fill="none" stroke="#4c8fd8" stroke-width="1.3" stroke-linejoin="miter"/></svg></div><div class="t">Meaningful Use Measure Enrollment</div><div class="ar"><svg width="20.5" height="20.5" viewBox="0 0 20.5 20.5"><circle cx="10.25" cy="10.25" r="9.6" fill="none" stroke="#8c8c8c" stroke-width="1.3"/><path d="M6.15,14.35 L14.35,6.15 M7.17,6.15 L14.35,6.15 L14.35,13.32" fill="none" stroke="#8c8c8c" stroke-width="1.3"/></svg></div></div>
<div class="di" style="top:152.10px"><div class="st"><svg width="15" height="14.5" viewBox="0 0 15 14.5"><polygon points="7.50,0.84 9.43,5.02 14.01,5.57 10.63,8.70 11.53,13.23 7.50,10.97 3.47,13.23 4.37,8.70 0.99,5.57 5.57,5.02" fill="none" stroke="#4c8fd8" stroke-width="1.3" stroke-linejoin="miter"/></svg></div><div class="t"></div><div class="ar"><svg width="20.5" height="20.5" viewBox="0 0 20.5 20.5"><circle cx="10.25" cy="10.25" r="9.6" fill="none" stroke="#8c8c8c" stroke-width="1.3"/><path d="M6.15,14.35 L14.35,6.15 M7.17,6.15 L14.35,6.15 L14.35,13.32" fill="none" stroke="#8c8c8c" stroke-width="1.3"/></svg></div></div>
<div class="di" style="top:189.75px"><div class="st"><svg width="15" height="14.5" viewBox="0 0 15 14.5"><polygon points="7.50,0.84 9.43,5.02 14.01,5.57 10.63,8.70 11.53,13.23 7.50,10.97 3.47,13.23 4.37,8.70 0.99,5.57 5.57,5.02" fill="none" stroke="#4c8fd8" stroke-width="1.3" stroke-linejoin="miter"/></svg></div><div class="t">Meaningful Use Measure Status - All Physicians</div><div class="ar"><svg width="20.5" height="20.5" viewBox="0 0 20.5 20.5"><circle cx="10.25" cy="10.25" r="9.6" fill="none" stroke="#8c8c8c" stroke-width="1.3"/><path d="M6.15,14.35 L14.35,6.15 M7.17,6.15 L14.35,6.15 L14.35,13.32" fill="none" stroke="#8c8c8c" stroke-width="1.3"/></svg></div></div>
<div class="di" style="top:227.40px"><div class="st"><svg width="15" height="14.5" viewBox="0 0 15 14.5"><polygon points="7.50,0.84 9.43,5.02 14.01,5.57 10.63,8.70 11.53,13.23 7.50,10.97 3.47,13.23 4.37,8.70 0.99,5.57 5.57,5.02" fill="none" stroke="#4c8fd8" stroke-width="1.3" stroke-linejoin="miter"/></svg></div><div class="t">Measures Report</div><div class="ar"><svg width="20.5" height="20.5" viewBox="0 0 20.5 20.5"><circle cx="10.25" cy="10.25" r="9.6" fill="none" stroke="#8c8c8c" stroke-width="1.3"/><path d="M6.15,14.35 L14.35,6.15 M7.17,6.15 L14.35,6.15 L14.35,13.32" fill="none" stroke="#8c8c8c" stroke-width="1.3"/></svg></div></div>
<div class="di" style="top:265.05px"><div class="st"><svg width="15" height="14.5" viewBox="0 0 15 14.5"><polygon points="7.50,0.84 9.43,5.02 14.01,5.57 10.63,8.70 11.53,13.23 7.50,10.97 3.47,13.23 4.37,8.70 0.99,5.57 5.57,5.02" fill="none" stroke="#4c8fd8" stroke-width="1.3" stroke-linejoin="miter"/></svg></div><div class="t">MIPS Participation Status</div><div class="ar"><svg width="20.5" height="20.5" viewBox="0 0 20.5 20.5"><circle cx="10.25" cy="10.25" r="9.6" fill="none" stroke="#8c8c8c" stroke-width="1.3"/><path d="M6.15,14.35 L14.35,6.15 M7.17,6.15 L14.35,6.15 L14.35,13.32" fill="none" stroke="#8c8c8c" stroke-width="1.3"/></svg></div></div>
<div class="di" style="top:302.70px"><div class="st"><svg width="15" height="14.5" viewBox="0 0 15 14.5"><polygon points="7.50,0.84 9.43,5.02 14.01,5.57 10.63,8.70 11.53,13.23 7.50,10.97 3.47,13.23 4.37,8.70 0.99,5.57 5.57,5.02" fill="none" stroke="#4c8fd8" stroke-width="1.3" stroke-linejoin="miter"/></svg></div><div class="t">Patient Quality of Care Status</div><div class="ar"><svg width="20.5" height="20.5" viewBox="0 0 20.5 20.5"><circle cx="10.25" cy="10.25" r="9.6" fill="none" stroke="#8c8c8c" stroke-width="1.3"/><path d="M6.15,14.35 L14.35,6.15 M7.17,6.15 L14.35,6.15 L14.35,13.32" fill="none" stroke="#8c8c8c" stroke-width="1.3"/></svg></div></div>
<div class="di" style="top:340.35px"><div class="st"><svg width="15" height="14.5" viewBox="0 0 15 14.5"><polygon points="7.50,0.84 9.43,5.02 14.01,5.57 10.63,8.70 11.53,13.23 7.50,10.97 3.47,13.23 4.37,8.70 0.99,5.57 5.57,5.02" fill="none" stroke="#4c8fd8" stroke-width="1.3" stroke-linejoin="miter"/></svg></div><div class="t">Provider Custom Date Range Status</div><div class="ar"><svg width="20.5" height="20.5" viewBox="0 0 20.5 20.5"><circle cx="10.25" cy="10.25" r="9.6" fill="none" stroke="#8c8c8c" stroke-width="1.3"/><path d="M6.15,14.35 L14.35,6.15 M7.17,6.15 L14.35,6.15 L14.35,13.32" fill="none" stroke="#8c8c8c" stroke-width="1.3"/></svg></div></div>
<div class="di" style="top:378.00px"><div class="st"><svg width="15" height="14.5" viewBox="0 0 15 14.5"><polygon points="7.50,0.84 9.43,5.02 14.01,5.57 10.63,8.70 11.53,13.23 7.50,10.97 3.47,13.23 4.37,8.70 0.99,5.57 5.57,5.02" fill="none" stroke="#4c8fd8" stroke-width="1.3" stroke-linejoin="miter"/></svg></div><div class="t">Provider Quality of Care Status</div><div class="ar"><svg width="20.5" height="20.5" viewBox="0 0 20.5 20.5"><circle cx="10.25" cy="10.25" r="9.6" fill="none" stroke="#8c8c8c" stroke-width="1.3"/><path d="M6.15,14.35 L14.35,6.15 M7.17,6.15 L14.35,6.15 L14.35,13.32" fill="none" stroke="#8c8c8c" stroke-width="1.3"/></svg></div></div>
<div class="di" style="top:415.65px"><div class="st"><svg width="15" height="14.5" viewBox="0 0 15 14.5"><polygon points="7.50,0.84 9.43,5.02 14.01,5.57 10.63,8.70 11.53,13.23 7.50,10.97 3.47,13.23 4.37,8.70 0.99,5.57 5.57,5.02" fill="none" stroke="#4c8fd8" stroke-width="1.3" stroke-linejoin="miter"/></svg></div><div class="t">Provider Quality Year over Year</div><div class="ar"><svg width="20.5" height="20.5" viewBox="0 0 20.5 20.5"><circle cx="10.25" cy="10.25" r="9.6" fill="none" stroke="#8c8c8c" stroke-width="1.3"/><path d="M6.15,14.35 L14.35,6.15 M7.17,6.15 L14.35,6.15 L14.35,13.32" fill="none" stroke="#8c8c8c" stroke-width="1.3"/></svg></div></div>
<div class="di" style="top:453.30px"><div class="st"><svg width="15" height="14.5" viewBox="0 0 15 14.5"><polygon points="7.50,0.84 9.43,5.02 14.01,5.57 10.63,8.70 11.53,13.23 7.50,10.97 3.47,13.23 4.37,8.70 0.99,5.57 5.57,5.02" fill="none" stroke="#4c8fd8" stroke-width="1.3" stroke-linejoin="miter"/></svg></div><div class="t">QRDA Category I Options</div><div class="ar"><svg width="20.5" height="20.5" viewBox="0 0 20.5 20.5"><circle cx="10.25" cy="10.25" r="9.6" fill="none" stroke="#8c8c8c" stroke-width="1.3"/><path d="M6.15,14.35 L14.35,6.15 M7.17,6.15 L14.35,6.15 L14.35,13.32" fill="none" stroke="#8c8c8c" stroke-width="1.3"/></svg></div></div>
<div class="di" style="top:490.95px"><div class="st"><svg width="15" height="14.5" viewBox="0 0 15 14.5"><polygon points="7.50,0.84 9.43,5.02 14.01,5.57 10.63,8.70 11.53,13.23 7.50,10.97 3.47,13.23 4.37,8.70 0.99,5.57 5.57,5.02" fill="none" stroke="#4c8fd8" stroke-width="1.3" stroke-linejoin="miter"/></svg></div><div class="t">QRDA Category III Options</div><div class="ar"><svg width="20.5" height="20.5" viewBox="0 0 20.5 20.5"><circle cx="10.25" cy="10.25" r="9.6" fill="none" stroke="#8c8c8c" stroke-width="1.3"/><path d="M6.15,14.35 L14.35,6.15 M7.17,6.15 L14.35,6.15 L14.35,13.32" fill="none" stroke="#8c8c8c" stroke-width="1.3"/></svg></div></div>
<div class="di" style="top:528.60px"><div class="st"><svg width="15" height="14.5" viewBox="0 0 15 14.5"><polygon points="7.50,0.84 9.43,5.02 14.01,5.57 10.63,8.70 11.53,13.23 7.50,10.97 3.47,13.23 4.37,8.70 0.99,5.57 5.57,5.02" fill="none" stroke="#4c8fd8" stroke-width="1.3" stroke-linejoin="miter"/></svg></div><div class="t">Quality Analysis</div><div class="ar"><svg width="20.5" height="20.5" viewBox="0 0 20.5 20.5"><circle cx="10.25" cy="10.25" r="9.6" fill="none" stroke="#8c8c8c" stroke-width="1.3"/><path d="M6.15,14.35 L14.35,6.15 M7.17,6.15 L14.35,6.15 L14.35,13.32" fill="none" stroke="#8c8c8c" stroke-width="1.3"/></svg></div></div>
<div class="di" style="top:566.25px"><div class="st"><svg width="15" height="14.5" viewBox="0 0 15 14.5"><polygon points="7.50,0.84 9.43,5.02 14.01,5.57 10.63,8.70 11.53,13.23 7.50,10.97 3.47,13.23 4.37,8.70 0.99,5.57 5.57,5.02" fill="none" stroke="#4c8fd8" stroke-width="1.3" stroke-linejoin="miter"/></svg></div><div class="t">Quality Benchmark Report</div><div class="ar"><svg width="20.5" height="20.5" viewBox="0 0 20.5 20.5"><circle cx="10.25" cy="10.25" r="9.6" fill="none" stroke="#8c8c8c" stroke-width="1.3"/><path d="M6.15,14.35 L14.35,6.15 M7.17,6.15 L14.35,6.15 L14.35,13.32" fill="none" stroke="#8c8c8c" stroke-width="1.3"/></svg></div></div>
<div class="di" style="top:603.90px"><div class="st"><svg width="15" height="14.5" viewBox="0 0 15 14.5"><polygon points="7.50,0.84 9.43,5.02 14.01,5.57 10.63,8.70 11.53,13.23 7.50,10.97 3.47,13.23 4.37,8.70 0.99,5.57 5.57,5.02" fill="none" stroke="#4c8fd8" stroke-width="1.3" stroke-linejoin="miter"/></svg></div><div class="t">Quality Codes</div><div class="ar"><svg width="20.5" height="20.5" viewBox="0 0 20.5 20.5"><circle cx="10.25" cy="10.25" r="9.6" fill="none" stroke="#8c8c8c" stroke-width="1.3"/><path d="M6.15,14.35 L14.35,6.15 M7.17,6.15 L14.35,6.15 L14.35,13.32" fill="none" stroke="#8c8c8c" stroke-width="1.3"/></svg></div></div>
<div class="di" style="top:641.55px"><div class="st"><svg width="15" height="14.5" viewBox="0 0 15 14.5"><polygon points="7.50,0.84 9.43,5.02 14.01,5.57 10.63,8.70 11.53,13.23 7.50,10.97 3.47,13.23 4.37,8.70 0.99,5.57 5.57,5.02" fill="none" stroke="#4c8fd8" stroke-width="1.3" stroke-linejoin="miter"/></svg></div><div class="t">Quality Patient Problems</div><div class="ar"><svg width="20.5" height="20.5" viewBox="0 0 20.5 20.5"><circle cx="10.25" cy="10.25" r="9.6" fill="none" stroke="#8c8c8c" stroke-width="1.3"/><path d="M6.15,14.35 L14.35,6.15 M7.17,6.15 L14.35,6.15 L14.35,13.32" fill="none" stroke="#8c8c8c" stroke-width="1.3"/></svg></div></div>
<div class="di" style="top:679.20px"><div class="st"><svg width="15" height="14.5" viewBox="0 0 15 14.5"><polygon points="7.50,0.84 9.43,5.02 14.01,5.57 10.63,8.70 11.53,13.23 7.50,10.97 3.47,13.23 4.37,8.70 0.99,5.57 5.57,5.02" fill="none" stroke="#4c8fd8" stroke-width="1.3" stroke-linejoin="miter"/></svg></div><div class="t">Quality Results</div><div class="ar"><svg width="20.5" height="20.5" viewBox="0 0 20.5 20.5"><circle cx="10.25" cy="10.25" r="9.6" fill="none" stroke="#8c8c8c" stroke-width="1.3"/><path d="M6.15,14.35 L14.35,6.15 M7.17,6.15 L14.35,6.15 L14.35,13.32" fill="none" stroke="#8c8c8c" stroke-width="1.3"/></svg></div></div>
<div class="di" style="top:716.85px"><div class="st"><svg width="15" height="14.5" viewBox="0 0 15 14.5"><polygon points="7.50,0.84 9.43,5.02 14.01,5.57 10.63,8.70 11.53,13.23 7.50,10.97 3.47,13.23 4.37,8.70 0.99,5.57 5.57,5.02" fill="none" stroke="#4c8fd8" stroke-width="1.3" stroke-linejoin="miter"/></svg></div><div class="t">Reporting Document Generator</div><div class="ar"><svg width="20.5" height="20.5" viewBox="0 0 20.5 20.5"><circle cx="10.25" cy="10.25" r="9.6" fill="none" stroke="#8c8c8c" stroke-width="1.3"/><path d="M6.15,14.35 L14.35,6.15 M7.17,6.15 L14.35,6.15 L14.35,13.32" fill="none" stroke="#8c8c8c" stroke-width="1.3"/></svg></div></div>
<div class="di" style="top:754.50px"><div class="st"><svg width="15" height="14.5" viewBox="0 0 15 14.5"><polygon points="7.50,0.84 9.43,5.02 14.01,5.57 10.63,8.70 11.53,13.23 7.50,10.97 3.47,13.23 4.37,8.70 0.99,5.57 5.57,5.02" fill="none" stroke="#4c8fd8" stroke-width="1.3" stroke-linejoin="miter"/></svg></div><div class="t">Risk Adjustment Factor Report</div><div class="ar"><svg width="20.5" height="20.5" viewBox="0 0 20.5 20.5"><circle cx="10.25" cy="10.25" r="9.6" fill="none" stroke="#8c8c8c" stroke-width="1.3"/><path d="M6.15,14.35 L14.35,6.15 M7.17,6.15 L14.35,6.15 L14.35,13.32" fill="none" stroke="#8c8c8c" stroke-width="1.3"/></svg></div></div>
<div id="hl"><span>Meaningful Use Measure Override</span></div>
</div>
<div class="abs" style="left:338.7px;top:88px;width:125.3px;height:37.6px;border-radius:6px 6px 0 0;background:#fff;overflow:hidden;border-left:1px solid #bbb"><div class="abs" style="left:0;top:0;right:0;height:8px;background:#5792d1"></div><div class="abs" style="left:10px;top:13.6px;font-size:16.25px;line-height:18px;color:#555;white-space:nowrap">Quality of Care</div></div>
<svg class="abs" style="left:620px;top:308px" width="22" height="27" viewBox="0 0 22 27"><path d="M7.5,1.5 C8.5,1 9.5,1.5 9.5,2.8 V10 C10.5,9.5 11.5,9.5 12,10.5 C13,10 14,10.2 14.5,11.2 C15.5,10.8 16.5,11 17,12 C18,11.8 19,12.5 19,13.5 V20 C19,23 17,25.5 13.5,25.5 H11 C8.5,25.5 7,24 6,22.5 L2,16.5 C1.2,15.3 1.5,14.3 2.5,14 C3.5,13.6 4.5,14.2 5.3,15.3 L7,17.5 V3 C7,2.3 7.2,1.8 7.5,1.5 Z" fill="#fff" stroke="#000" stroke-width="1.1"/><path d="M12,11 V17.5 M14.5,11.5 V17.5 M17,12.5 V17.5" stroke="#000" stroke-width="1"/></svg>
</body></html>
